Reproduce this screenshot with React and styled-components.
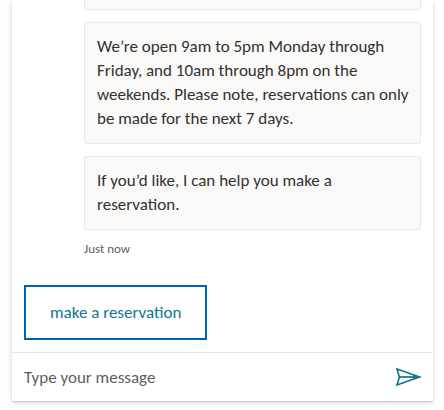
import React, { useState } from "react";
import styled, { createGlobalStyle } from "styled-components";

const GlobalStyle = createGlobalStyle`
  * { box-sizing: border-box; }
  body {
    margin: 0;
    background: #ffffff;
    font-family: Calibri, Carlito, Lato, sans-serif;
  }
`;

const ChatPanel = styled.main`
  display: flex;
  flex-direction: column;
  margin: 0 11px 9px 12px;
  background: #ffffff;
  border-radius: 0 0 2px 2px;
  box-shadow: 0 2px 7px rgba(0, 0, 0, 0.12), 0 1px 2px rgba(0, 0, 0, 0.16);
`;

const Transcript = styled.section`
  display: flex;
  flex-direction: column;
  gap: 12px;
  padding: 0 12px 0 72px;
`;

const Bubble = styled.p`
  margin: 0;
  padding: ${({ $continued }) => ($continued ? "0 8px 9px 12px" : "12px 8px 12px 12px")};
  border: 1px solid #e9e8e8;
  border-top-width: ${({ $continued }) => ($continued ? "0" : "1px")};
  border-radius: ${({ $continued }) => ($continued ? "0 0 2px 2px" : "2px")};
  background: #faf9f8;
  color: #323130;
  font-size: 17px;
  line-height: 24px;
`;

const Timestamp = styled.time`
  color: #605e5c;
  font-size: 13px;
  line-height: 14px;
`;

const Suggestions = styled.div`
  display: flex;
  padding: 29px 12px 12px;
`;

const SuggestionButton = styled.button`
  height: 55px;
  padding: 0 24px;
  border: 2px solid #0063b1;
  background: #ffffff;
  color: #0f7590;
  font-family: inherit;
  font-size: 17px;
  line-height: 24px;
  cursor: pointer;
`;

const SendBox = styled.form`
  display: flex;
  align-items: center;
  height: 49px;
  border-top: 1px solid #e6e6e6;
`;

const MessageInput = styled.input`
  flex: 1;
  min-width: 0;
  height: 48px;
  padding: 0 12px;
  border: 0;
  outline: 0;
  background: transparent;
  color: #323130;
  font-family: inherit;
  font-size: 17px;

  &::placeholder {
    color: #605e5c;
    opacity: 1;
  }
`;

const SendButton = styled.button`
  display: flex;
  align-items: center;
  justify-content: center;
  width: 50px;
  height: 48px;
  padding: 0;
  border: 0;
  background: transparent;
  color: #0f7590;
  cursor: pointer;
`;

function SendIcon() {
  return (
    <svg width="28" height="20" viewBox="0 0 28 20" fill="none" aria-hidden="true">
      <path
        d="M3 2 25.5 10 3 18 5.4 10Z"
        stroke="currentColor"
        strokeWidth="1.6"
      />
      <path d="M5.4 10H24" stroke="currentColor" strokeWidth="1.7" />
      <path d="M19 8 27.5 10 19 12Z" fill="currentColor" />
    </svg>
  );
}

const messages = [
  "We’re open 9am to 5pm Monday through Friday, and 10am through 8pm on the weekends. Please note, reservations can only be made for the next 7 days.",
  "If you’d like, I can help you make a reservation.",
];

export default function App() {
  const [draft, setDraft] = useState("");

  return (
    <>
      <GlobalStyle />
      <ChatPanel>
        <Transcript>
          <Bubble $continued />
          {messages.map((text) => (
            <Bubble key={text}>{text}</Bubble>
          ))}
          <Timestamp>Just now</Timestamp>
        </Transcript>
        <Suggestions>
          <SuggestionButton type="button" onClick={() => setDraft("make a reservation")}>
            make a reservation
          </SuggestionButton>
        </Suggestions>
        <SendBox onSubmit={(event) => event.preventDefault()}>
          <MessageInput
            type="text"
            aria-label="Message"
            placeholder="Type your message"
            value={draft}
            onChange={(event) => setDraft(event.target.value)}
          />
          <SendButton type="submit" aria-label="Send">
            <SendIcon />
          </SendButton>
        </SendBox>
      </ChatPanel>
    </>
  );
}
